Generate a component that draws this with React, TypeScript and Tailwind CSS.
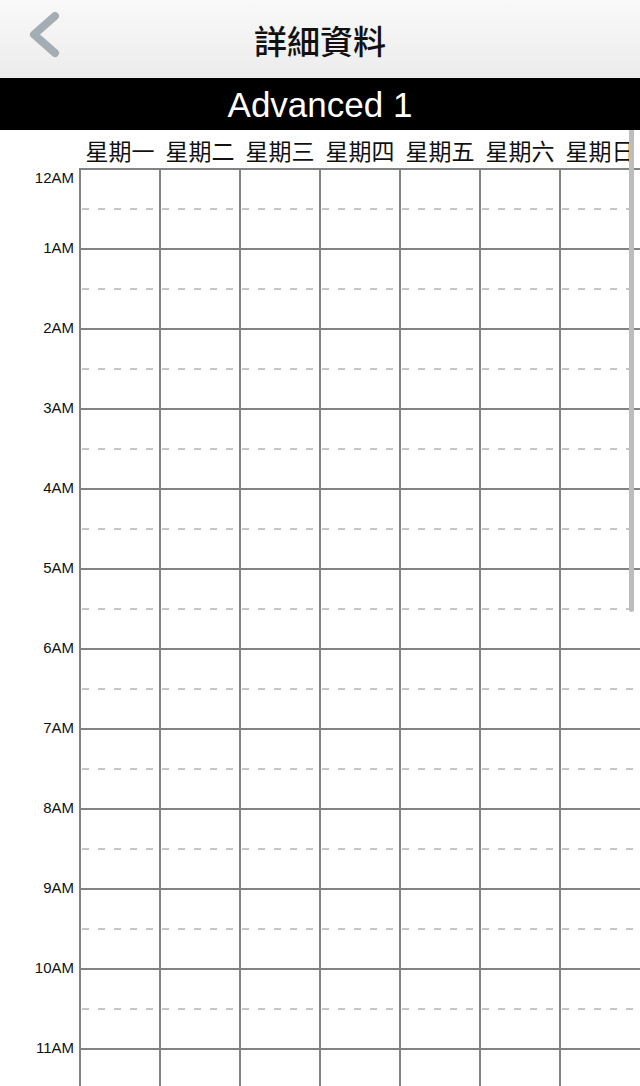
import React from "react";

const days = ["星期一", "星期二", "星期三", "星期四", "星期五", "星期六", "星期日"];
const hours = ["12AM", "1AM", "2AM", "3AM", "4AM", "5AM", "6AM", "7AM", "8AM", "9AM", "10AM", "11AM"];

export default function App() {
  return (
    <div className="relative h-[1086px] w-[640px] overflow-hidden bg-white font-['Liberation_Sans','Noto_Sans_CJK_TC',sans-serif]">
      {/* Nav bar */}
      <div className="relative flex h-[78px] items-center justify-center bg-gradient-to-b from-[#f9f9f9] to-[#ececec]">
        <svg className="absolute left-[28px] top-[11px]" width="34" height="48" viewBox="0 0 34 48">
          <polyline points="27,5 6,23.5 27,42" fill="none" stroke="#a3adb3" strokeWidth="8" strokeLinecap="round" strokeLinejoin="round" />
        </svg>
        <div className="pt-[2px] text-[33px] font-medium leading-none text-[#111] font-['Noto_Sans_CJK_TC',sans-serif]">詳細資料</div>
      </div>
      {/* Black bar */}
      <div className="flex h-[52px] items-center justify-center bg-black">
        <span className="text-[35px] leading-none text-white font-['Liberation_Sans',sans-serif]">Advanced 1</span>
      </div>
      {/* Day header */}
      <div className="flex h-[38px] pl-[80px]">
        {days.map((d) => (
          <div key={d} className="flex w-[80px] items-center justify-center pt-[2px] text-[23px] leading-none text-[#111] font-['Noto_Sans_CJK_TC',sans-serif]">
            {d}
          </div>
        ))}
      </div>
      {/* Grid */}
      <div className="flex">
        <div className="w-[79px] shrink-0">
          {hours.map((h, i) => (
            <div key={h} className="h-[80px] pr-[5px] text-right">
              <div className={`text-[15px] leading-[16px] text-[#111] ${i === 0 ? "translate-y-[2px]" : "-translate-y-[8px]"}`}>{h}</div>
            </div>
          ))}
        </div>
        <div className="flex-1">
          {hours.map((h) => (
            <div key={h} className="flex h-[80px] border-t-2 border-[#838383]">
              {days.map((d) => (
                <div key={d} className="flex w-[80px] flex-col border-l-2 border-[#838383]">
                  <div className="h-[38px]" />
                  <div className="ml-[1px] h-[2px] bg-[linear-gradient(to_right,#c6c6c6_7px,transparent_7px)] bg-[length:16px_2px] bg-repeat-x" />
                </div>
              ))}
            </div>
          ))}
        </div>
      </div>
      {/* Scroll indicator */}
      <div className="absolute left-[629px] top-[130px] h-[482px] w-[5px] rounded-b-[3px] bg-[#bdbdbd]" />
    </div>
  );
}
